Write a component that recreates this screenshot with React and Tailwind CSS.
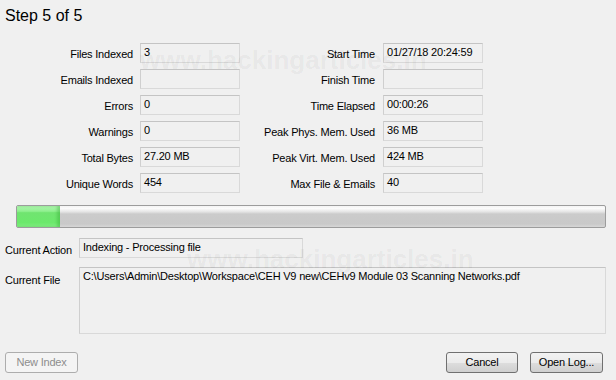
import React from "react";

const font = { fontFamily: '"Liberation Sans", Arial, sans-serif' };

function Box({ value, w = "w-[100px]", h = "h-[20px]" }) {
  return (
    <div
      className={`${w} ${h} border border-[#d9d9d9] border-t-[#c4c4c4] border-l-[#cfcfcf] bg-[#f0f0f0] pl-[3px] pt-[2px] text-[11px] leading-[13px] tracking-[-0.2px] text-black whitespace-nowrap overflow-hidden`}
    >
      {value}
    </div>
  );
}

function Row({ l1, v1, l2, v2 }) {
  return (
    <div className="flex items-center h-[20px]">
      <div className="w-[133px] text-right text-[11px] leading-[13px] tracking-[-0.2px] pt-[2px]">{l1}</div>
      <div className="ml-[7px]">
        <Box value={v1} />
      </div>
      <div className="w-[135px] text-right text-[11px] leading-[13px] tracking-[-0.2px] pt-[2px]">{l2}</div>
      <div className="ml-[8px]">
        <Box value={v2} />
      </div>
    </div>
  );
}

function Button({ children, disabled, w }) {
  return (
    <div
      className={`${w} h-[21px] rounded-[3px] border flex items-center justify-center text-[11px] tracking-[-0.2px] ${
        disabled
          ? "border-[#adadad] bg-[#f4f4f4] text-[#8d8d8d]"
          : "border-[#707070] bg-[linear-gradient(to_bottom,#f2f2f2_0%,#ebebeb_50%,#dddddd_51%,#cfcfcf_100%)] text-black"
      }`}
    >
      {children}
    </div>
  );
}

export default function App() {
  const rows = [
    ["Files Indexed", "3", "Start Time", "01/27/18 20:24:59"],
    ["Emails Indexed", "", "Finish Time", ""],
    ["Errors", "0", "Time Elapsed", "00:00:26"],
    ["Warnings", "0", "Peak Phys. Mem. Used", "36 MB"],
    ["Total Bytes", "27.20 MB", "Peak Virt. Mem. Used", "424 MB"],
    ["Unique Words", "454", "Max File & Emails", "40"],
  ];
  return (
    <div className="relative w-[616px] h-[380px] bg-[#f0f0f0] text-black overflow-hidden" style={font}>
      <div className="pt-[7px] pl-[5px] text-[16px] leading-[18px]">Step 5 of 5</div>

      <div className="mt-[18px] flex flex-col gap-[6px]">
        {rows.map((r) => (
          <Row key={r[0]} l1={r[0]} v1={r[1]} l2={r[2]} v2={r[3]} />
        ))}
      </div>

      <div className="mt-[12px] ml-[16px] w-[590px] h-[23px] rounded-[2px] border border-[#9c9c9c] bg-[linear-gradient(to_bottom,#f4f4f4_0%,#fbfbfb_12%,#e4e4e4_28%,#cbcbcb_38%,#c9c9c9_85%,#d6d6d6_100%)] overflow-hidden flex">
        <div className="w-[43px] h-full bg-[linear-gradient(to_bottom,#b2f5b2_0%,#8ff08f_25%,#70e470_32%,#6ce96c_80%,#86ee86_100%)] shadow-[inset_-3px_0_3px_rgba(40,160,40,0.35)]" />
      </div>

      <div className="mt-[10px] flex">
        <div className="w-[79px] pl-[5px] pt-[6px] text-[11px] leading-[13px] tracking-[-0.2px]">Current Action</div>
        <Box value="Indexing - Processing file" w="w-[224px]" />
      </div>

      <div className="mt-[9px] flex">
        <div className="w-[79px] pl-[5px] pt-[7px] text-[11px] leading-[13px] tracking-[-0.2px]">Current File</div>
        <Box
          value="C:\Users\Admin\Desktop\Workspace\CEH V9 new\CEHv9 Module 03 Scanning Networks.pdf"
          w="w-[527px]"
          h="h-[67px]"
        />
      </div>

      <div className="mt-[18px] flex items-center px-[5px]">
        <Button disabled w="w-[73px]">New Index</Button>
        <div className="flex-1" />
        <Button w="w-[72px]">Cancel</Button>
        <div className="w-[12px]" />
        <Button w="w-[73px]">Open Log...</Button>
        <div className="w-[8px]" />
      </div>

      <div className="pointer-events-none absolute left-[140px] top-[47px] text-[26px] leading-[26px] font-bold text-black/[0.05] whitespace-nowrap">
        www.hackingarticles.in
      </div>
      <div className="pointer-events-none absolute left-[187px] top-[246px] text-[26px] leading-[26px] font-bold text-black/[0.05] whitespace-nowrap">
        www.hackingarticles.in
      </div>
    </div>
  );
}
